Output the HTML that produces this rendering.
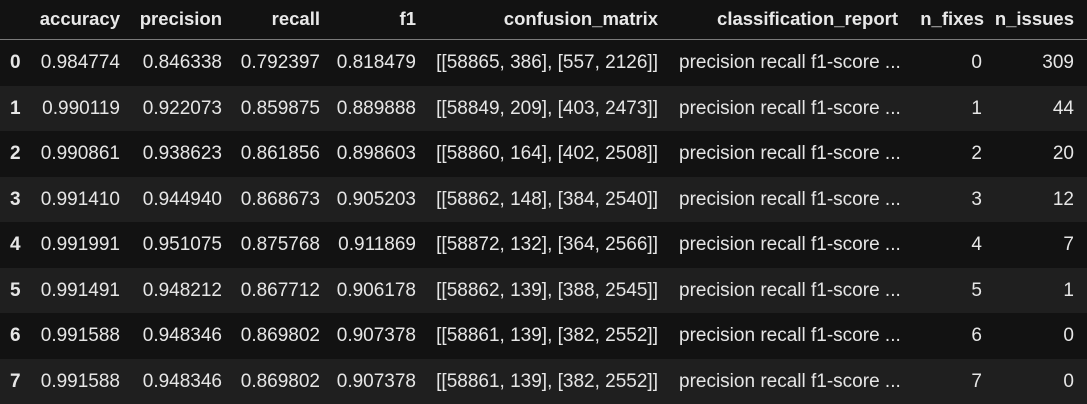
<!DOCTYPE html>
<html><head><style>
html,body{margin:0;padding:0;background:#121212;width:1087px;height:404px;overflow:hidden}
body{font-family:"Liberation Sans",sans-serif;color:#e6e6e6;position:relative}
.row{position:absolute;left:0;width:1087px;height:45.5px}
.odd{background:#1f1f1f}
.c{position:absolute;top:0;line-height:45.5px;font-size:19px;white-space:nowrap}
.r{text-align:right}
.h .c{line-height:38px;font-weight:bold;color:#e8e8e8;font-size:18.5px}
.i{font-weight:bold;left:10px}
.line{position:absolute;left:0;top:39px;width:1087px;height:1px;background:#7a7a7a}
</style></head><body>
<div class="row h" style="top:0;height:39px">
<div class="c r" style="right:967px">accuracy</div>
<div class="c r" style="right:865px">precision</div>
<div class="c r" style="right:767px">recall</div>
<div class="c r" style="right:671px">f1</div>
<div class="c r" style="right:429px">confusion_matrix</div>
<div class="c r" style="right:189px">classification_report</div>
<div class="c r" style="right:103px">n_fixes</div>
<div class="c r" style="right:13px">n_issues</div>
</div>
<div class="line"></div>
<div class="row" style="top:40px"><div class="c i">0</div><div class="c r" style="right:967px">0.984774</div><div class="c r" style="right:865px">0.846338</div><div class="c r" style="right:767px">0.792397</div><div class="c r" style="right:671px">0.818479</div><div class="c r" style="right:429px">[[58865, 386], [557, 2126]]</div><div class="c" style="left:679px">precision recall f1-score ...</div><div class="c r" style="right:105px">0</div><div class="c r" style="right:13px">309</div></div>
<div class="row odd" style="top:85.5px"><div class="c i">1</div><div class="c r" style="right:967px">0.990119</div><div class="c r" style="right:865px">0.922073</div><div class="c r" style="right:767px">0.859875</div><div class="c r" style="right:671px">0.889888</div><div class="c r" style="right:429px">[[58849, 209], [403, 2473]]</div><div class="c" style="left:679px">precision recall f1-score ...</div><div class="c r" style="right:105px">1</div><div class="c r" style="right:13px">44</div></div>
<div class="row" style="top:131px"><div class="c i">2</div><div class="c r" style="right:967px">0.990861</div><div class="c r" style="right:865px">0.938623</div><div class="c r" style="right:767px">0.861856</div><div class="c r" style="right:671px">0.898603</div><div class="c r" style="right:429px">[[58860, 164], [402, 2508]]</div><div class="c" style="left:679px">precision recall f1-score ...</div><div class="c r" style="right:105px">2</div><div class="c r" style="right:13px">20</div></div>
<div class="row odd" style="top:176.5px"><div class="c i">3</div><div class="c r" style="right:967px">0.991410</div><div class="c r" style="right:865px">0.944940</div><div class="c r" style="right:767px">0.868673</div><div class="c r" style="right:671px">0.905203</div><div class="c r" style="right:429px">[[58862, 148], [384, 2540]]</div><div class="c" style="left:679px">precision recall f1-score ...</div><div class="c r" style="right:105px">3</div><div class="c r" style="right:13px">12</div></div>
<div class="row" style="top:222px"><div class="c i">4</div><div class="c r" style="right:967px">0.991991</div><div class="c r" style="right:865px">0.951075</div><div class="c r" style="right:767px">0.875768</div><div class="c r" style="right:671px">0.911869</div><div class="c r" style="right:429px">[[58872, 132], [364, 2566]]</div><div class="c" style="left:679px">precision recall f1-score ...</div><div class="c r" style="right:105px">4</div><div class="c r" style="right:13px">7</div></div>
<div class="row odd" style="top:267.5px"><div class="c i">5</div><div class="c r" style="right:967px">0.991491</div><div class="c r" style="right:865px">0.948212</div><div class="c r" style="right:767px">0.867712</div><div class="c r" style="right:671px">0.906178</div><div class="c r" style="right:429px">[[58862, 139], [388, 2545]]</div><div class="c" style="left:679px">precision recall f1-score ...</div><div class="c r" style="right:105px">5</div><div class="c r" style="right:13px">1</div></div>
<div class="row" style="top:313px"><div class="c i">6</div><div class="c r" style="right:967px">0.991588</div><div class="c r" style="right:865px">0.948346</div><div class="c r" style="right:767px">0.869802</div><div class="c r" style="right:671px">0.907378</div><div class="c r" style="right:429px">[[58861, 139], [382, 2552]]</div><div class="c" style="left:679px">precision recall f1-score ...</div><div class="c r" style="right:105px">6</div><div class="c r" style="right:13px">0</div></div>
<div class="row odd" style="top:358.5px"><div class="c i">7</div><div class="c r" style="right:967px">0.991588</div><div class="c r" style="right:865px">0.948346</div><div class="c r" style="right:767px">0.869802</div><div class="c r" style="right:671px">0.907378</div><div class="c r" style="right:429px">[[58861, 139], [382, 2552]]</div><div class="c" style="left:679px">precision recall f1-score ...</div><div class="c r" style="right:105px">7</div><div class="c r" style="right:13px">0</div></div>
</body></html>
